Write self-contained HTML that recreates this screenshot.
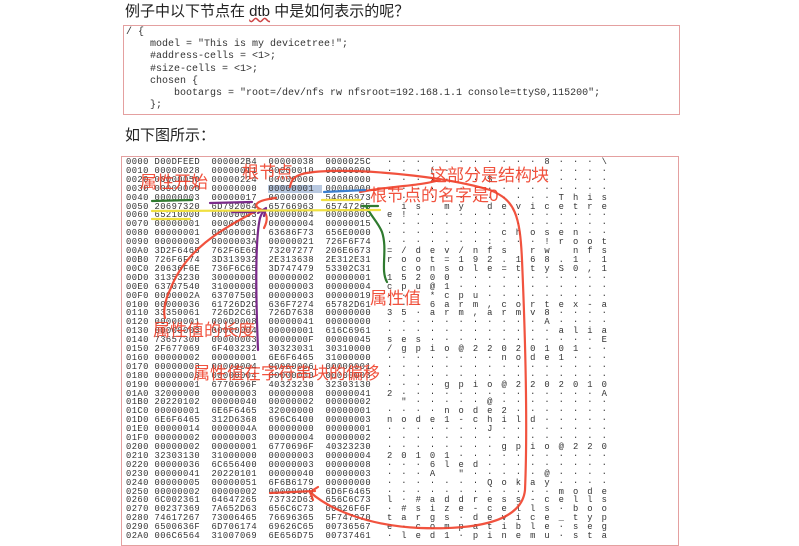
<!DOCTYPE html>
<html><head><meta charset="utf-8"><style>
body{margin:0;width:799px;height:539px;background:#fff;overflow:hidden;position:relative;font-family:"Liberation Sans","Noto Sans CJK SC",sans-serif}
.t{position:absolute;left:125px;font-size:15px;color:#222}
.code{position:absolute;left:123px;top:25px;width:557px;height:90px;border:1px solid #e4a0a0;box-sizing:border-box}
.code pre{margin:0;position:absolute;left:2px;top:1px;font-family:"Liberation Mono",monospace;font-size:10px;line-height:12.2px;color:#333}
.hex{position:absolute;left:121px;top:156px;width:558px;height:390px;border:1px solid #e4a0a0;box-sizing:border-box}
.hex pre{margin:0;position:absolute;top:1px;font-family:"Liberation Mono",monospace;font-size:8.8px;line-height:8.9px;color:#333;white-space:pre}
.a{position:absolute;color:#f0402a;font-size:17px;line-height:17px;opacity:.9}
</style></head><body>
<div class="t" style="top:0px">例子中以下节点在 <span style="text-decoration:underline wavy #c44">dtb</span> 中是如何表示的呢？</div>
<div class="code"><pre>/ {
    model = "This is my devicetree!";
    #address-cells = &lt;1&gt;;
    #size-cells = &lt;1&gt;;
    chosen {
        bootargs = "root=/dev/nfs rw nfsroot=192.168.1.1 console=ttyS0,115200";
    };</pre></div>
<div class="t" style="top:124px">如下图所示：</div>
<div class="hex">
<div style="position:absolute;left:146px;top:28px;width:54px;height:8px;background:#b8c8e0"></div>
<pre style="left:4px;letter-spacing:0.42px">0000 D00DFEED  000002B4  00000038  0000025C
0010 00000028  00000011  00000010  00000000
0020 00000050  00000224  00000000  00000000
0030 00000000  00000000  00000001  00000000
0040 00000003  00000017  00000000  54686973
0050 20697320  6D792064  65766963  65747265
0060 65210000  00000003  00000004  0000000C
0070 00000001  00000003  00000004  00000015
0080 00000001  00000001  63686F73  656E0000
0090 00000003  0000003A  00000021  726F6F74
00A0 3D2F6465  762F6E66  73207277  206E6673
00B0 726F6F74  3D313932  2E313638  2E312E31
00C0 20636F6E  736F6C65  3D747479  53302C31
00D0 31353230  30000000  00000002  00000001
00E0 63707540  31000000  00000003  00000004
00F0 0000002A  63707500  00000003  00000019
0100 00000036  61726D2C  636F7274  65782D61
0110 33350061  726D2C61  726D7638  00000000
0120 00000001  00000008  00000041  00000000
0130 00000003  00000004  00000001  616C6961
0140 73657300  00000003  0000000F  00000045
0150 2F677069  6F403232  30323031  30310000
0160 00000002  00000001  6E6F6465  31000000
0170 00000003  00000004  00000006  00000001
0180 00000003  00000004  00000000  00000003
0190 00000001  6770696F  40323230  32303130
01A0 32000000  00000003  00000008  00000041
01B0 20220102  00000040  00000002  00000002
01C0 00000001  6E6F6465  32000000  00000001
01D0 6E6F6465  312D6368  696C6400  00000003
01E0 00000014  0000004A  00000000  00000001
01F0 00000002  00000003  00000004  00000002
0200 00000002  00000001  6770696F  40323230
0210 32303130  31000000  00000003  00000004
0220 00000036  6C656400  00000003  00000008
0230 00000041  20220101  00000040  00000003
0240 00000005  00000051  6F6B6179  00000000
0250 00000002  00000002  00000009  6D6F6465
0260 6C002361  64647265  73732D63  656C6C73
0270 00237369  7A652D63  656C6C73  00626F6F
0280 74617267  73006465  76696365  5F747970
0290 6500636F  6D706174  69626C65  00736567
02A0 006C6564  31007069  6E656D75  00737461</pre>
<pre style="left:265px;letter-spacing:-0.51px">·  ·  ·  ·  ·  ·  ·  ·  ·  ·  ·  8  ·  ·  ·  \
·  ·  ·  (  ·  ·  ·  ·  ·  ·  ·  ·  ·  ·  ·  ·
·  ·  ·  x  ·  ·  ·  $  ·  ·  ·  ·  ·  ·  ·  ·
·  ·  ·  ·  ·  ·  ·  ·  ·  ·  ·  ·  ·  ·  ·  ·
·  ·  ·  ·  ·  ·  ·  ·  ·  ·  ·  ·  T  h  i  s
   i  s     m  y     d  e  v  i  c  e  t  r  e
e  !  ·  ·  ·  ·  ·  ·  ·  ·  ·  ·  ·  ·  ·  ·
·  ·  ·  ·  ·  ·  ·  ·  ·  ·  ·  ·  ·  ·  ·  ·
·  ·  ·  ·  ·  ·  ·  ·  c  h  o  s  e  n  ·  ·
·  ·  ·  ·  ·  ·  ·  :  ·  ·  ·  !  r  o  o  t
=  /  d  e  v  /  n  f  s     r  w     n  f  s
r  o  o  t  =  1  9  2  .  1  6  8  .  1  .  1
   c  o  n  s  o  l  e  =  t  t  y  S  0  ,  1
1  5  2  0  0  ·  ·  ·  ·  ·  ·  ·  ·  ·  ·  ·
c  p  u  @  1  ·  ·  ·  ·  ·  ·  ·  ·  ·  ·  ·
·  ·  ·  *  c  p  u  ·  ·  ·  ·  ·  ·  ·  ·  ·
·  ·  ·  6  a  r  m  ,  c  o  r  t  e  x  -  a
3  5  ·  a  r  m  ,  a  r  m  v  8  ·  ·  ·  ·
·  ·  ·  ·  ·  ·  ·  ·  ·  ·  ·  A  ·  ·  ·  ·
·  ·  ·  ·  ·  ·  ·  ·  ·  ·  ·  ·  a  l  i  a
s  e  s  ·  ·  ·  ·  ·  ·  ·  ·  ·  ·  ·  ·  E
/  g  p  i  o  @  2  2  0  2  0  1  0  1  ·  ·
·  ·  ·  ·  ·  ·  ·  ·  n  o  d  e  1  ·  ·  ·
·  ·  ·  ·  ·  ·  ·  ·  ·  ·  ·  ·  ·  ·  ·  ·
·  ·  ·  ·  ·  ·  ·  ·  ·  ·  ·  ·  ·  ·  ·  ·
·  ·  ·  ·  g  p  i  o  @  2  2  0  2  0  1  0
2  ·  ·  ·  ·  ·  ·  ·  ·  ·  ·  ·  ·  ·  ·  A
   "  ·  ·  ·  ·  ·  @  ·  ·  ·  ·  ·  ·  ·  ·
·  ·  ·  ·  n  o  d  e  2  ·  ·  ·  ·  ·  ·  ·
n  o  d  e  1  -  c  h  i  l  d  ·  ·  ·  ·  ·
·  ·  ·  ·  ·  ·  ·  J  ·  ·  ·  ·  ·  ·  ·  ·
·  ·  ·  ·  ·  ·  ·  ·  ·  ·  ·  ·  ·  ·  ·  ·
·  ·  ·  ·  ·  ·  ·  ·  g  p  i  o  @  2  2  0
2  0  1  0  1  ·  ·  ·  ·  ·  ·  ·  ·  ·  ·  ·
·  ·  ·  6  l  e  d  ·  ·  ·  ·  ·  ·  ·  ·  ·
·  ·  ·  A     "  ·  ·  ·  ·  ·  @  ·  ·  ·  ·
·  ·  ·  ·  ·  ·  ·  Q  o  k  a  y  ·  ·  ·  ·
·  ·  ·  ·  ·  ·  ·  ·  ·  ·  ·  ·  m  o  d  e
l  ·  #  a  d  d  r  e  s  s  -  c  e  l  l  s
·  #  s  i  z  e  -  c  e  l  l  s  ·  b  o  o
t  a  r  g  s  ·  d  e  v  i  c  e  _  t  y  p
e  ·  c  o  m  p  a  t  i  b  l  e  ·  s  e  g
·  l  e  d  1  ·  p  i  n  e  m  u  ·  s  t  a</pre>
</div>
<svg width="799" height="539" style="position:absolute;left:0;top:0" fill="none" stroke-linecap="round" stroke-linejoin="round">
<g stroke="#f0402a" stroke-width="2.2" opacity=".9">
<path d="M290 187 C292 175 300 172 330 171 C380 170 450 178 490 190 C515 200 520 215 522 260 C525 330 528 420 525 490 C522 520 480 530 420 528 C370 526 330 510 310 492"/>
<path d="M310 492 L318 487 M310 492 L313 500"/>
<path d="M276 198 C258 200 250 205 262 210 C268 214 268 220 264 228"/>
<path d="M258 210 C220 230 185 250 170 290 C165 300 163 312 165 318"/>
<path d="M270 493 L315 491"/>
<path d="M360 192 C390 186 420 186 440 180"/>
</g>
<g stroke-width="2.2">
<path d="M152 201 L192 200" stroke="#2f7a2f"/>
<path d="M362 206 L378 206 M366 206 C370 215 378 222 382 232 C388 250 380 270 387 282" stroke="#2f7a2f"/>
<path d="M210 203 L252 202" stroke="#7a2a8a"/>
<path d="M258 350 C256 300 255 240 260 218 C262 212 264 210 266 209 M258 213 L266 208 L264 216" stroke="#7a2a8a"/>
<path d="M232 212 L255 212" stroke="#7a2a8a"/>
<path d="M324 192 L365 190" stroke="#3a7fd0"/>
<path d="M152 211 L380 210" stroke="#f0e040"/>
<path d="M152 219 L190 219 M322 200 L360 200" stroke="#f0e040"/>
</g>
</svg>
<div class="a" style="left:140px;top:174px">属性开始</div>
<div class="a" style="left:242px;top:164px">根节点</div>
<div class="a" style="left:430px;top:167px">这部分是结构块</div>
<div class="a" style="left:370px;top:187px">根节点的名字是0</div>
<div class="a" style="left:370px;top:290px">属性值</div>
<div class="a" style="left:153px;top:322px">属性值的长度</div>
<div class="a" style="left:193px;top:365px">属性值在字符串块的偏移</div>
</body></html>
